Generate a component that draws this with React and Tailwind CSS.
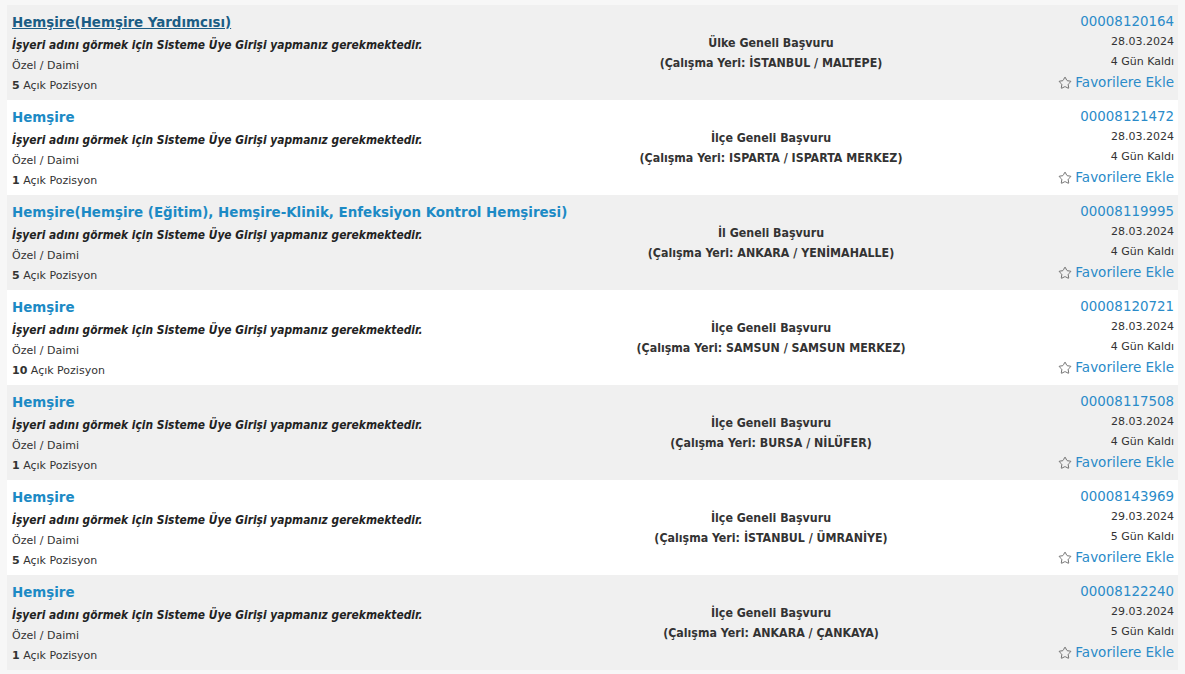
import { Star } from 'lucide-react';

const jobs = [
  { title: 'Hemşire(Hemşire Yardımcısı)', hover: true, scope: 'Ülke Geneli Başvuru', place: 'İSTANBUL / MALTEPE', id: '00008120164', date: '28.03.2024', left: '4 Gün Kaldı', count: 5 },
  { title: 'Hemşire', scope: 'İlçe Geneli Başvuru', place: 'ISPARTA / ISPARTA MERKEZ', id: '00008121472', date: '28.03.2024', left: '4 Gün Kaldı', count: 1 },
  { title: 'Hemşire(Hemşire (Eğitim), Hemşire-Klinik, Enfeksiyon Kontrol Hemşiresi)', scope: 'İl Geneli Başvuru', place: 'ANKARA / YENİMAHALLE', id: '00008119995', date: '28.03.2024', left: '4 Gün Kaldı', count: 5 },
  { title: 'Hemşire', scope: 'İlçe Geneli Başvuru', place: 'SAMSUN / SAMSUN MERKEZ', id: '00008120721', date: '28.03.2024', left: '4 Gün Kaldı', count: 10 },
  { title: 'Hemşire', scope: 'İlçe Geneli Başvuru', place: 'BURSA / NİLÜFER', id: '00008117508', date: '28.03.2024', left: '4 Gün Kaldı', count: 1 },
  { title: 'Hemşire', scope: 'İlçe Geneli Başvuru', place: 'İSTANBUL / ÜMRANİYE', id: '00008143969', date: '29.03.2024', left: '5 Gün Kaldı', count: 5 },
  { title: 'Hemşire', scope: 'İlçe Geneli Başvuru', place: 'ANKARA / ÇANKAYA', id: '00008122240', date: '29.03.2024', left: '5 Gün Kaldı', count: 1 }
];

export default function App() {
  return (
    <div className="min-h-screen bg-[#f7f7f7] pt-[5px] px-[7px] font-['DejaVu_Sans',sans-serif]">
      {jobs.map((job, i) => (
        <div
          key={job.id}
          className={`flex h-[95px] ${i % 2 === 0 ? 'bg-[#f0f0f0]' : 'bg-white'}`}
        >
          {/* Left: title and details */}
          <div className="w-[593px] pl-[5px] pt-[7px]">
            <div
              className={`text-[14.9px] font-bold leading-[20px] font-['DejaVu_Sans_Condensed','DejaVu_Sans',sans-serif] ${
                job.hover ? 'text-[#1b5d85] underline' : 'text-[#1c8ac5]'
              }`}
            >
              {job.title}
            </div>
            <div className="mt-[3px] text-[11.85px] font-bold italic leading-[20px] text-[#222] font-['DejaVu_Sans_Condensed','DejaVu_Sans',sans-serif]">
              İşyeri adını görmek için Sisteme Üye Girişi yapmanız gerekmektedir.
            </div>
            <div className="mt-[1px] text-[11px] leading-[20px] text-[#333]">Özel / Daimi</div>
            <div className="text-[11px] leading-[20px] text-[#333]">
              <span className="font-bold">{job.count}</span> Açık Pozisyon
            </div>
          </div>

          {/* Middle: scope and location */}
          <div className="w-[342px] flex flex-col justify-center text-center text-[12.3px] font-bold leading-[20px] text-[#333] font-['DejaVu_Sans_Condensed','DejaVu_Sans',sans-serif]">
            <div>{job.scope}</div>
            <div>(Çalışma Yeri: {job.place})</div>
          </div>

          {/* Right: id, date, favorite */}
          <div className="flex-1 pr-[4px] pt-[7px] text-right leading-[20px]">
            <div className="text-[13.4px] text-[#2a8bc9]">{job.id}</div>
            <div className="text-[11px] text-[#333]">{job.date}</div>
            <div className="text-[11px] text-[#333]">{job.left}</div>
            <div className="flex items-center justify-end gap-[3px] text-[13.5px] text-[#2a8bc9] leading-[21px]">
              <Star size={14} strokeWidth={1.4} className="text-[#555]" />
              Favorilere Ekle
            </div>
          </div>
        </div>
      ))}
    </div>
  );
}
